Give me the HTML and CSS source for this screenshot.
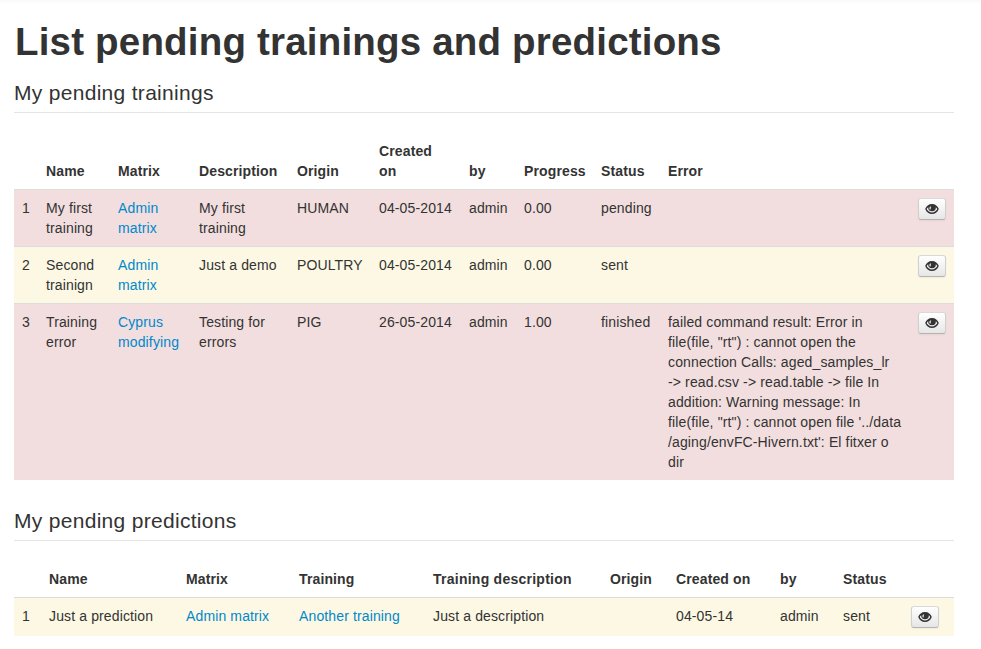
FILE: index.html
```html
<!DOCTYPE html>
<html lang="en">
<head>
<meta charset="utf-8">
<title>List pending trainings and predictions</title>
<link rel="stylesheet" href="styles.css">
</head>
<body>
<svg class="sprite" width="0" height="0" aria-hidden="true">
  <symbol id="eye" viewBox="0 0 14 12">
    <path fill="#333" fill-rule="evenodd" d="M7 1C3.700 1 1.200 3 .2 6 1.500 9.200 4 11 7 11S12.500 9.200 13.800 6C12.800 3 10.300 1 7 1ZM3.200 4.200C2.300 5 1.900 5.700 1.800 6.200 2.900 8.200 4.800 9.400 7 9.400S11.100 8.200 12.200 6.200C12.100 5.700 11.700 5 10.800 4.200 11.100 6.800 9.500 8.300 7 8.300S2.900 6.800 3.200 4.200ZM5.100 3.600C4.300 4.400 4.300 5.700 4.800 6.500L5.800 6.200C5.500 5.200 5.700 4.500 6.300 3.800Z"/>
  </symbol>
</svg>
<main class="container">
  <h1>List pending trainings and predictions</h1>
  <section>
    <h2 class="legend">My pending trainings</h2>
    <table class="table trainings">
      <colgroup><col class="c-num"><col class="c-name"><col class="c-matrix"><col class="c-desc"><col class="c-origin"><col class="c-created"><col class="c-by"><col class="c-progress"><col class="c-status"><col class="c-error"><col class="c-action"></colgroup>
      <thead>
        <tr><th></th><th>Name</th><th>Matrix</th><th>Description</th><th>Origin</th><th>Created<br>on</th><th>by</th><th>Progress</th><th>Status</th><th>Error</th><th></th></tr>
      </thead>
      <tbody>
        <tr class="error"><td>1</td><td>My first<br>training</td><td><a href="#">Admin<br>matrix</a></td><td>My first<br>training</td><td>HUMAN</td><td>04-05-2014</td><td>admin</td><td>0.00</td><td>pending</td><td></td><td><a class="btn" href="#"><svg><use href="#eye"/></svg></a></td></tr>
        <tr class="warning"><td>2</td><td>Second<br>trainign</td><td><a href="#">Admin<br>matrix</a></td><td>Just a demo</td><td>POULTRY</td><td>04-05-2014</td><td>admin</td><td>0.00</td><td>sent</td><td></td><td><a class="btn" href="#"><svg><use href="#eye"/></svg></a></td></tr>
        <tr class="error"><td>3</td><td>Training<br>error</td><td><a href="#">Cyprus<br>modifying</a></td><td>Testing for<br>errors</td><td>PIG</td><td>26-05-2014</td><td>admin</td><td>1.00</td><td>finished</td><td>failed command result: Error in<br>file(file, "rt") : cannot open the<br>connection Calls: aged_samples_lr<br>-&gt; read.csv -&gt; read.table -&gt; file In<br>addition: Warning message: In<br>file(file, "rt") : cannot open file '../data<br>/aging/envFC-Hivern.txt': El fitxer o<br>dir</td><td><a class="btn" href="#"><svg><use href="#eye"/></svg></a></td></tr>
      </tbody>
    </table>
  </section>
  <section>
    <h2 class="legend">My pending predictions</h2>
    <table class="table predictions">
      <colgroup><col class="p-num"><col class="p-name"><col class="p-matrix"><col class="p-training"><col class="p-desc"><col class="p-origin"><col class="p-created"><col class="p-by"><col class="p-status"><col class="p-action"></colgroup>
      <thead>
        <tr><th></th><th>Name</th><th>Matrix</th><th>Training</th><th class="wide">Training description</th><th>Origin</th><th>Created on</th><th>by</th><th>Status</th><th></th></tr>
      </thead>
      <tbody>
        <tr class="warning"><td>1</td><td>Just a prediction</td><td><a href="#">Admin matrix</a></td><td><a href="#">Another training</a></td><td>Just a description</td><td></td><td>04-05-14</td><td>admin</td><td>sent</td><td><a class="btn" href="#"><svg><use href="#eye"/></svg></a></td></tr>
      </tbody>
    </table>
  </section>
</main>
</body>
</html>
```
FILE: styles.css
```css
html { overflow: hidden; }
body {
  margin: 0;
  background: #fff linear-gradient(#f9f9f9, #fff) no-repeat 0 0 / 100% 4px;
  color: #333;
  font: 14px/20px "Liberation Sans", Arial, sans-serif;
}
.sprite { position: absolute; }
.container { width: 940px; padding: 22px 0 0 14px; }
h1 {
  margin: 0 0 10px;
  padding-left: 1px;
  font-size: 38.5px;
  line-height: 40px;
  letter-spacing: .19px;
  white-space: nowrap;
}
.legend {
  margin: 0 0 20px;
  padding-top: 2px;
  border-bottom: 1px solid #e5e5e5;
  font-size: 21px;
  font-weight: normal;
  line-height: 38px;
  letter-spacing: .3px;
}
.table {
  width: 940px;
  margin-bottom: 20px;
  table-layout: fixed;
  border-collapse: separate;
  border-spacing: 0;
}
th, td { padding: 8px; text-align: left; white-space: nowrap; letter-spacing: .13px; }
th { vertical-align: bottom; }
.wide { letter-spacing: .25px; }
td { border-top: 1px solid #ddd; vertical-align: top; }
.error td { background: #f2dede; }
.warning td { background: #fcf8e3; }
a { color: #08c; text-decoration: none; }
.btn {
  display: flex;
  box-sizing: border-box;
  width: 28px;
  height: 22px;
  align-items: center;
  justify-content: center;
  border: 1px solid #ccc;
  border-color: #d9d9d9 #d0d0d0 #b3b3b3;
  border-radius: 3px;
  background: linear-gradient(#fff, #e6e6e6);
  box-shadow: inset 0 1px 0 rgba(255, 255, 255, .2), 0 1px 2px rgba(0, 0, 0, .05);
}
.btn svg { width: 14px; height: 12px; }

.c-num { width: 24px; }
.c-name { width: 72px; }
.c-matrix { width: 81px; }
.c-desc { width: 98px; }
.c-origin { width: 82px; }
.c-created { width: 90px; }
.c-by { width: 55px; }
.c-progress { width: 77px; }
.c-status { width: 67px; }
.c-error { width: 250px; }
.c-action { width: 44px; }

.p-num { width: 27px; }
.p-name { width: 137px; }
.p-matrix { width: 113px; }
.p-training { width: 134px; }
.p-desc { width: 177px; }
.p-origin { width: 66px; }
.p-created { width: 104px; }
.p-by { width: 63px; }
.p-status { width: 68px; }
.p-action { width: 51px; }
```
